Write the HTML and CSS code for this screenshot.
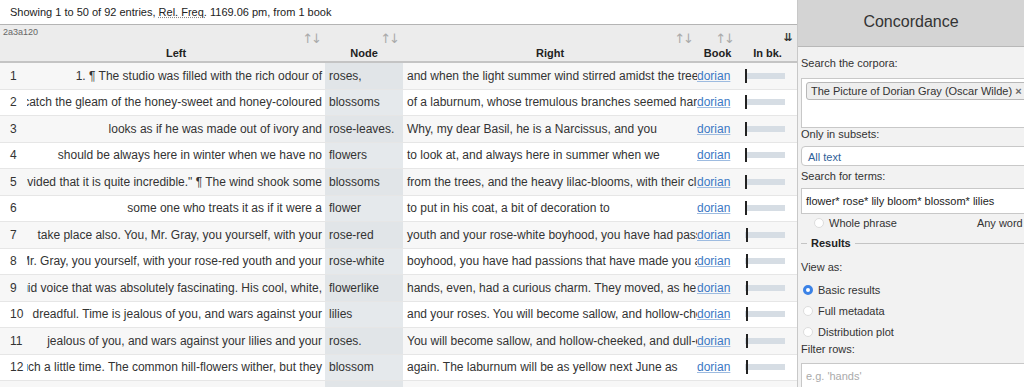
FILE: index.html
```html
<!DOCTYPE html>
<html lang="en">
<head>
    <meta charset="UTF-8">
    <title>Concordance</title>
    <link rel="stylesheet" href="styles.css">
</head>
<body>
    <div class="app">
        <div class="main">
            <div class="info">Showing 1 to 50 of 92 entries, <span class="abbr">Rel. Freq.</span> 1169.06 pm, from 1 book</div>

            <div class="thead">
                <div class="th th-num"><span class="hash">2a3a120</span></div>
                <div class="th">Left<span class="sort">↑↓</span></div>
                <div class="th">Node<span class="sort">↑↓</span></div>
                <div class="th">Right<span class="sort">↑↓</span></div>
                <div class="th">Book<span class="sort">↑↓</span></div>
                <div class="th">In bk.<span class="sort active">⇊</span></div>
            </div>

            <div class="tbody" id="rows"></div>
        </div>

        <div class="sidebar">
            <div class="side-head">Concordance</div>
            <div class="side-body">
                <label class="lbl">Search the corpora:</label>
                <div class="chips">
                    <span class="chip">The Picture of Dorian Gray (Oscar Wilde) <b>×</b></span>
                </div>

                <label class="lbl">Only in subsets:</label>
                <div class="select">All text</div>

                <label class="lbl">Search for terms:</label>
                <div class="text-input">flower* rose* lily bloom* blossom* lilies</div>

                <div class="radio-row">
                    <span class="opt"><span class="radio"></span>Whole phrase</span>
                    <span class="opt any">Any word</span>
                </div>

                <div class="legend"><span>Results</span></div>

                <label class="lbl">View as:</label>
                <div class="opts">
                    <span class="opt"><span class="radio checked"></span>Basic results</span>
                    <span class="opt"><span class="radio"></span>Full metadata</span>
                    <span class="opt"><span class="radio"></span>Distribution plot</span>
                </div>

                <label class="lbl">Filter rows:</label>
                <div class="text-input placeholder">e.g. 'hands'</div>
            </div>
        </div>
    </div>

    <script>
        const concordance = [
            ["1. ¶ The studio was filled with the rich odour of", "roses,", "and when the light summer wind stirred amidst the trees of the garden", 0],
            ["and the lad could catch the gleam of the honey-sweet and honey-coloured", "blossoms", "of a laburnum, whose tremulous branches seemed hardly able to bear", 0],
            ["looks as if he was made out of ivory and", "rose-leaves.", "Why, my dear Basil, he is a Narcissus, and you", 0],
            ["should be always here in winter when we have no", "flowers", "to look at, and always here in summer when we", 0],
            ["It is all so vivided that it is quite incredible.\" ¶ The wind shook some", "blossoms", "from the trees, and the heavy lilac-blooms, with their clustering stars", 0],
            ["some one who treats it as if it were a", "flower", "to put in his coat, a bit of decoration to", 0],
            ["take place also. You, Mr. Gray, you yourself, with your", "rose-red", "youth and your rose-white boyhood, you have had passions", 1],
            ["Mr. Gray, you yourself, with your rose-red youth and your", "rose-white", "boyhood, you have had passions that have made you afraid", 1],
            ["and a low languid voice that was absolutely fascinating. His cool, white,", "flowerlike", "hands, even, had a curious charm. They moved, as he", 1],
            ["dreadful. Time is jealous of you, and wars against your", "lilies", "and your roses. You will become sallow, and hollow-cheeked", 1],
            ["jealous of you, and wars against your lilies and your", "roses.", "You will become sallow, and hollow-cheeked, and dull-eyed.", 1],
            ["Time is so short, such a little time. The common hill-flowers wither, but they", "blossom", "again. The laburnum will be as yellow next June as", 1],
            ["June as it is now. In a month there will be purple stars on the", "clematis,", "and year after year the green night of its leaves", 1]
        ];

        function renderRows() {
            const container = document.getElementById('rows');

            concordance.forEach((row, index) => {
                const [left, node, right, pos] = row;
                const tr = document.createElement('div');
                tr.className = 'tr';

                tr.innerHTML = `
                    <div class="td td-num">${index + 1}</div>
                    <div class="td td-left"><span>${left}</span></div>
                    <div class="td td-node">${node}</div>
                    <div class="td td-right">${right}</div>
                    <div class="td td-book"><a href="#">dorian</a></div>
                    <div class="td td-bk"><div class="bar"><i class="mark" style="left: ${pos}px"></i></div></div>
                `;

                container.appendChild(tr);
            });
        }

        renderRows();
    </script>
</body>
</html>
```

FILE: styles.css
```css
* {
    margin: 0;
    padding: 0;
    box-sizing: border-box;
}

body {
    font-family: 'Liberation Sans', Arial, sans-serif;
    font-size: 11px;
    color: #333;
    background: #fff;
    overflow: hidden;
}

.app {
    display: flex;
    height: 100vh;
}

.main {
    width: 797px;
    flex-shrink: 0;
}

.info {
    height: 25px;
    padding: 6px 0 0 10px;
    font-size: 11px;
    color: #222;
    border-bottom: 1px solid #b4b4b4;
}

.abbr {
    text-decoration: underline dotted #888;
}

/* table header */
.thead,
.tr {
    display: grid;
    grid-template-columns: 27px 298px 78px 294px 41px 59px;
}

.thead {
    height: 38px;
    background: #ececec;
    border-bottom: 2px solid #c4c4c4;
}

.th {
    position: relative;
    display: flex;
    align-items: flex-end;
    justify-content: center;
    padding-bottom: 2px;
    font-weight: bold;
    color: #222;
}

.th-num {
    align-items: flex-start;
    justify-content: flex-start;
    padding: 2px 0 0 3px;
}

.hash {
    font-size: 9px;
    font-weight: normal;
    color: #666;
}

.sort {
    position: absolute;
    top: 6px;
    right: 5px;
    font-family: 'DejaVu Sans', sans-serif;
    font-size: 13px;
    font-weight: normal;
    letter-spacing: -2px;
    color: #aaa;
}

.sort.active {
    top: 6px;
    right: 4px;
    font-size: 11px;
    font-weight: bold;
    letter-spacing: 0;
    color: #333;
}

/* rows */
.tr {
    height: 26.5px;
    font-size: 12px;
    border-bottom: 1px solid #e6e6e6;
}

.tr:nth-child(odd) {
    background: #f7f7f7;
}

.td {
    display: flex;
    align-items: center;
    white-space: nowrap;
    overflow: hidden;
}

.td-num {
    padding-left: 10px;
}

.td-left {
    justify-content: flex-end;
    padding-right: 3px;
}

.td-left span {
    flex-shrink: 0;
}

.td-node {
    padding-left: 4px;
    background: #e5e9ec;
}

.tr:nth-child(odd) .td-node {
    background: #e1e5e8;
}

.td-right {
    padding-left: 4px;
}

.td-book a {
    color: #3b78c4;
    text-decoration: underline;
    text-decoration-color: #9dbbe0;
}

.td-bk {
    padding-left: 7px;
}

.bar {
    position: relative;
    width: 40px;
    height: 6px;
    background: #d6dde4;
}

.mark {
    position: absolute;
    top: -4px;
    width: 2px;
    height: 14px;
    background: #222;
}

/* sidebar */
.sidebar {
    width: 227px;
    flex-shrink: 0;
    background: #f2f2f2;
    border-left: 1px solid #c8c8c8;
    overflow: hidden;
}

.side-head {
    height: 47px;
    padding-top: 13px;
    text-align: center;
    font-size: 16px;
    color: #333;
    background: #d4d4d4;
    border-bottom: 1px solid #b8b8b8;
}

.side-body {
    padding: 10px 0 0 3px;
    width: 250px;
}

.lbl {
    display: block;
    height: 14px;
    color: #333;
}

.chips {
    margin-top: 7px;
    height: 50px;
    padding: 3px 4px;
    background: #fff;
    border: 1px solid #c8c8c8;
}

.chip {
    display: inline-block;
    padding: 2px 4px;
    background: #eee;
    border: 1px solid #b8b8b8;
    border-radius: 3px;
}

.chip b {
    color: #666;
}

.select {
    margin: 4px 0 4px;
    height: 20px;
    padding: 4px 6px;
    color: #2f5f99;
    background: #fff;
    border: 1px solid #c8c8c8;
    border-radius: 4px;
}

.text-input {
    margin-top: 4px;
    height: 26px;
    padding: 6px 4px;
    color: #222;
    background: #fff;
    border: 1px solid #c8c8c8;
}

.text-input.placeholder {
    color: #aaa;
    margin-top: 6px;
}

.radio-row {
    display: flex;
    height: 18px;
    align-items: center;
    padding-left: 13px;
}

.radio-row .any {
    margin-left: 80px;
}

.opt {
    display: flex;
    align-items: center;
    gap: 5px;
}

.radio {
    width: 10px;
    height: 10px;
    border-radius: 50%;
    background: #fff;
    border: 1px solid #ddd;
}

.radio.checked {
    border: 3px solid #3b82e6;
}

.legend {
    display: flex;
    align-items: center;
    height: 22px;
    margin: 0 -30px 7px 0;
    font-weight: bold;
    color: #222;
}

.legend::before,
.legend::after {
    content: '';
    height: 1px;
    background: #c4c4c4;
}

.legend::before {
    width: 6px;
    margin-right: 4px;
}

.legend::after {
    flex: 1;
    margin-left: 4px;
}

.opts {
    display: flex;
    flex-direction: column;
    padding: 4px 0 1px 2px;
}

.opts .opt {
    height: 21px;
}
```
